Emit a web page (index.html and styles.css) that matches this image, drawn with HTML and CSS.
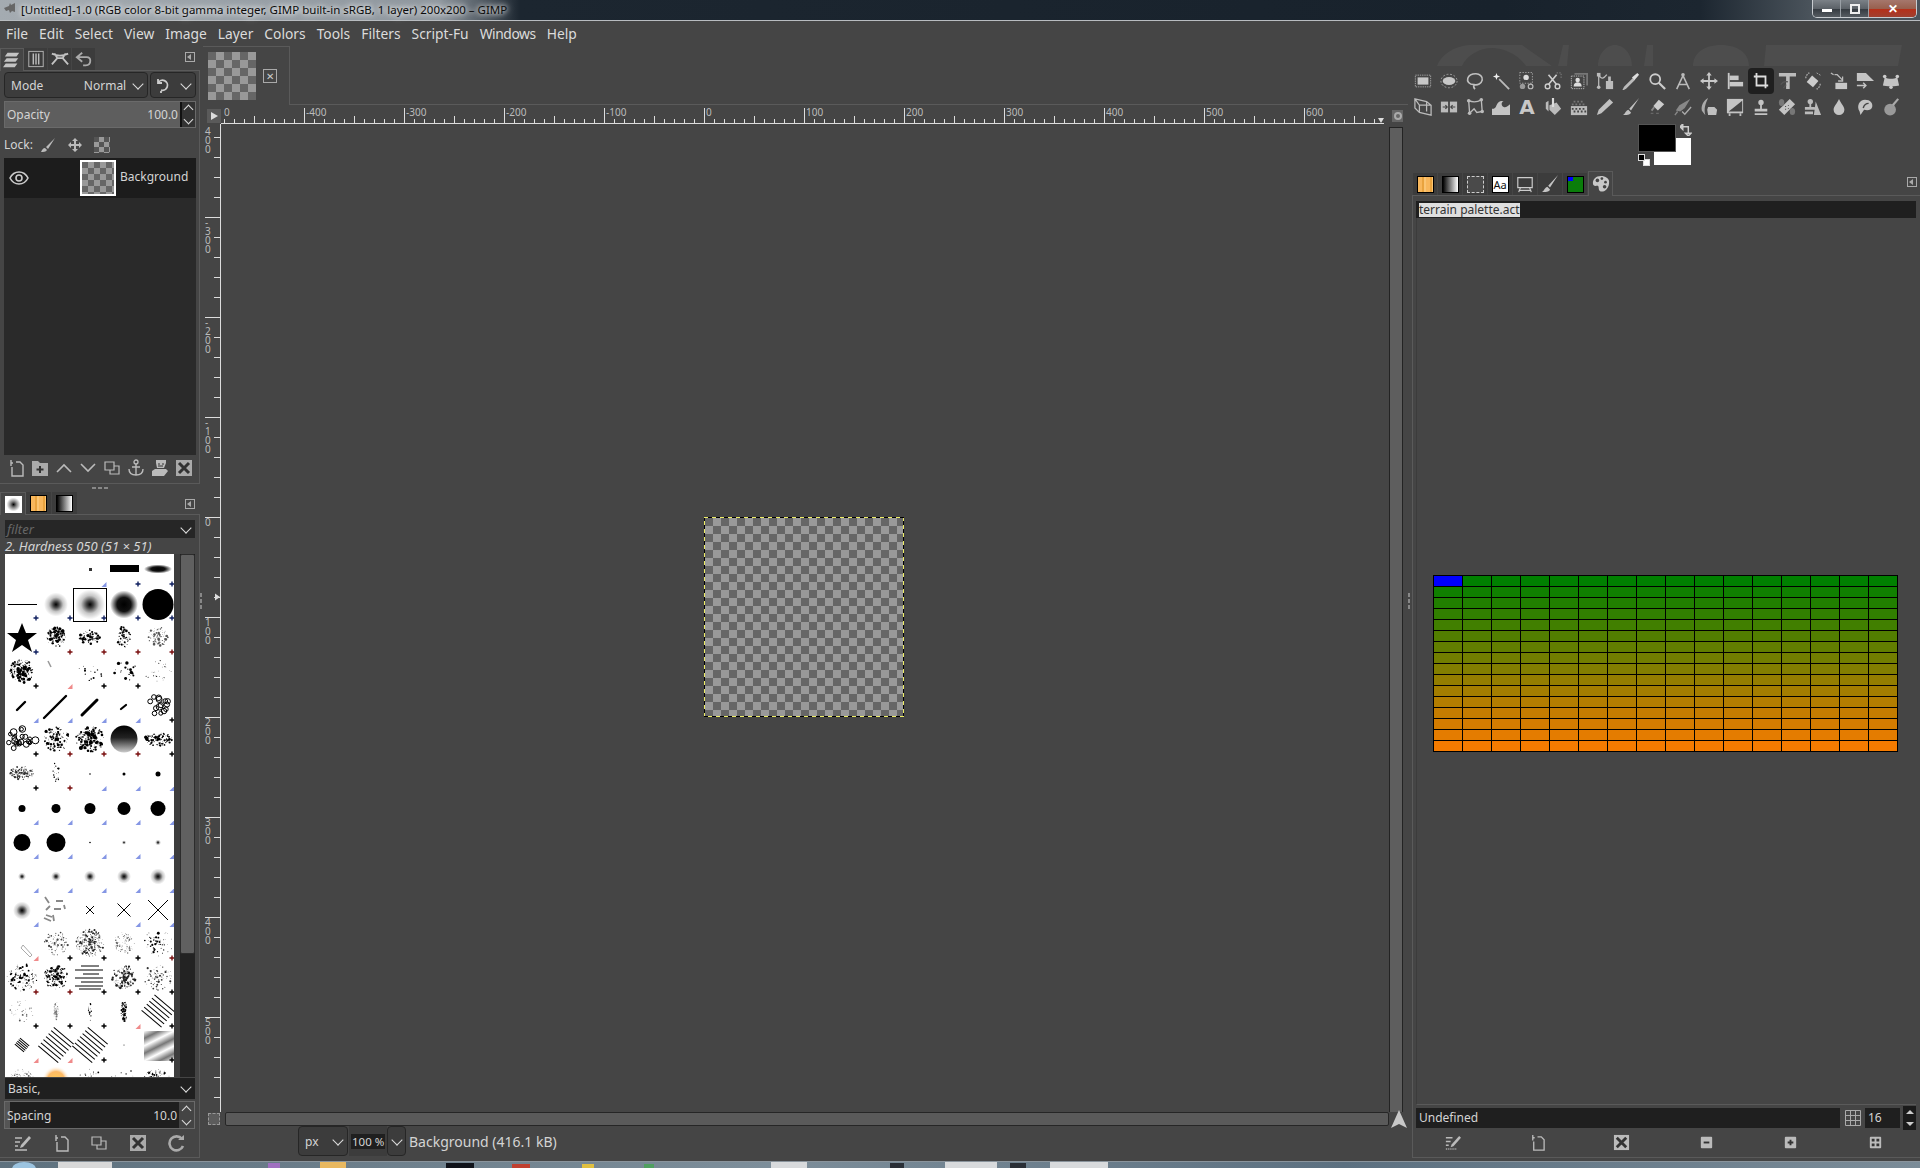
FILE: index.html
```html
<!DOCTYPE html>
<html lang="en">
<head>
  <meta charset="UTF-8" />
  <title>GIMP</title>
  <link rel="stylesheet" href="styles.css">
</head>
<body>
  <div class="titlebar">
    <svg class="app-icon" viewBox="0 0 16 14"><path d="M1 6l5-2 1-3 1 2 4-2v9l-3-1-2 2-1-3-3 1z" fill="#666"/></svg>
    <span class="title">[Untitled]-1.0 (RGB color 8-bit gamma integer, GIMP built-in sRGB, 1 layer) 200x200 – GIMP</span>
    <div class="winbtns">
      <div class="winbtn"><span class="min-glyph"></span></div>
      <div class="winbtn"><span class="max-glyph"></span></div>
      <div class="winbtn close">✕</div>
    </div>
  </div>

  <div class="menubar">
    <span>File</span><span>Edit</span><span>Select</span><span>View</span><span>Image</span><span>Layer</span><span>Colors</span><span>Tools</span><span>Filters</span><span>Script-Fu</span><span class="menu-win">Windows</span><span>Help</span>
  </div>

  <div class="main">
    <!-- left dock -->
    <div class="dock-left">
      <div class="tabs">
        <div class="tab active"><svg viewBox="0 0 20 20"><path d="M5 2h13l-3 4H2zM4 8h13l-3 4H1zM3 14h13l-3 4H0z" fill="#c4c4c4"/></svg></div>
        <div class="tab"><svg viewBox="0 0 20 20"><rect x="2" y="1.5" width="16" height="17" fill="none" stroke="#bbb"/><path d="M7 4v12M10 4v12M13 4v12" stroke="#bbb" stroke-width="1.6"/></svg></div>
        <div class="tab"><svg viewBox="0 0 20 20"><path d="M1 4c6 3 12 3 18 0M1 16l6-7 6 0 6 7M4 4l3 5M16 4l-3 5" fill="none" stroke="#c4c4c4" stroke-width="2"/></svg></div>
        <div class="tab"><svg viewBox="0 0 20 20"><path d="M8 3L2 8l6 5M3 8h10c3 0 4 2 4 4s-1 5-5 5H9" fill="none" stroke="#aaa" stroke-width="2"/></svg></div>
        <span class="collapse"></span>
      </div>
      <div class="panel layers">
        <div class="mode-row">
          <div class="combo mode"><span>Mode</span><span class="mode-val">Normal</span><i class="chev"></i></div>
          <div class="combo mode-small">
            <svg viewBox="0 0 16 16"><path d="M3 6a5 5 0 1 1 3 7M3 2v4h4M6 14v2" fill="none" stroke="#ccc" stroke-width="1.8"/></svg>
            <i class="chev"></i>
          </div>
        </div>
        <div class="slider opacity"><span>Opacity</span><span class="val">100.0</span><div class="spin"><i class="chev up"></i><i class="chev"></i></div></div>
        <div class="lock-row">
          <span>Lock:</span>
          <svg viewBox="0 0 16 16"><path d="M15 1L6 10l2 2zM5 11c-2 0-3 2-4 4 2 0 5 0 6-2z" fill="#bbb"/></svg>
          <svg viewBox="0 0 16 16"><path d="M8 1l3 3H9v3h3V5l3 3-3 3V9H9v3h2l-3 3-3-3h2V9H4v2L1 8l3-3v2h3V4H5z" fill="#bbb"/></svg>
          <div class="lock-check"></div>
        </div>
        <div class="layer-list">
          <div class="layer-row">
            <svg class="eye" viewBox="0 0 20 14"><path d="M1 7c4-8 14-8 18 0-4 8-14 8-18 0z" fill="none" stroke="#ccc" stroke-width="1.6"/><circle cx="10" cy="7" r="3" fill="none" stroke="#ccc" stroke-width="1.6"/></svg>
            <div class="layer-thumb"></div>
            <span class="layer-name">Background</span>
          </div>
        </div>
        <div class="icon-row layer-icons">
          <svg viewBox="0 0 18 18"><path d="M6 4H3.5M4 1v6M9 3h4l3 3v11H5V8" fill="none" stroke="#bbb" stroke-width="1.4"/></svg>
          <svg viewBox="0 0 18 18"><path d="M1 2h6l2 2h8v13H1z" fill="#aaa"/><path d="M9 7v7M5.500 10.500h7" stroke="#333" stroke-width="2"/></svg>
          <svg viewBox="0 0 18 18"><path d="M2 13l7-7 7 7" fill="none" stroke="#bbb" stroke-width="1.600"/></svg>
          <svg viewBox="0 0 18 18"><path d="M2 5l7 7 7-7" fill="none" stroke="#bbb" stroke-width="1.600"/></svg>
          <svg viewBox="0 0 18 18"><path d="M2 3h9v8H2zM7 11v4h9V7h-5" fill="none" stroke="#bbb" stroke-width="1.200"/></svg>
          <svg viewBox="0 0 18 18"><circle cx="9" cy="3" r="2" fill="none" stroke="#bbb" stroke-width="1.300"/><path d="M9 5v11M5 8h8M2 10c0 4 3 6 7 6s7-2 7-6" fill="none" stroke="#bbb" stroke-width="1.400"/></svg>
          <svg viewBox="0 0 18 18"><path d="M5 1h10v3l-2 5H6L5 4zM1 12l3-2h11l2 2-4 5H1z" fill="#bbb"/><path d="M7 5h2M11 5h2M7 7h5" stroke="#333"/></svg>
          <svg viewBox="0 0 18 18"><path d="M1 1h16v16H1z" fill="#aaa"/><path d="M4 4l10 10M14 4L4 14" stroke="#333" stroke-width="3"/></svg>
        </div>
      </div>
      <div class="drag-dots"><i></i><i></i><i></i></div>
      <div class="tabs tabs-brush">
        <div class="tab active"><div class="tab-thumb brush-thumb"></div></div>
        <div class="tab"><div class="tab-thumb pattern-thumb"></div></div>
        <div class="tab"><div class="tab-thumb gradient-thumb"></div></div>
        <span class="collapse"></span>
      </div>
      <div class="panel brushes">
        <div class="combo filter"><em>filter</em><i class="chev"></i></div>
        <div class="brush-name">2. Hardness 050 (51 × 51)</div>
        <div class="brush-view">
          <div class="brush-grid" id="brushGrid"></div>
          <div class="vscroll-dark"><div class="thumb"></div></div>
        </div>
        <div class="combo basic"><span>Basic,</span><i class="chev"></i></div>
        <div class="slider spacing"><span>Spacing</span><span class="val">10.0</span><div class="spin"><i class="chev up"></i><i class="chev"></i></div></div>
        <div class="icon-row brush-icons">
          <svg viewBox="0 0 18 18"><path d="M2 4h7M2 8h5M2 12h3M2 16h12" stroke="#bbb" stroke-width="1.600"/><path d="M16 2L8 11l-1 3 3-1 8-9z" fill="#bbb"/></svg>
          <svg viewBox="0 0 18 18"><path d="M6 4H3.500M4 1v6M9 3h4l3 3v11H5V8" fill="none" stroke="#bbb" stroke-width="1.400"/></svg>
          <svg viewBox="0 0 18 18"><path d="M2 3h9v8H2zM7 11v4h9V7h-5" fill="none" stroke="#bbb" stroke-width="1.200"/></svg>
          <svg viewBox="0 0 18 18"><path d="M1 1h16v16H1z" fill="#aaa"/><path d="M4 4l10 10M14 4L4 14" stroke="#333" stroke-width="3"/></svg>
          <svg viewBox="0 0 18 18"><path d="M15 5a7 7 0 1 0 1 7" fill="none" stroke="#aaa" stroke-width="2.600"/><path d="M11 6h6V1z" fill="#aaa"/></svg>
        </div>
      </div>
    </div>

    <div class="gutter left-gutter"><i></i><i></i><i></i></div>

    <!-- image window -->
    <div class="center">
      <div class="image-tabs">
        <div class="image-tab">
          <div class="tab-check"></div>
          <div class="tab-close">✕</div>
        </div>
      </div>
      <div class="ruler-row">
        <div class="ruler-btn"></div>
        <svg class="hruler" id="hruler" width="1163" height="19"></svg>
        <div class="qmask"><i></i></div>
      </div>
      <div class="canvas-row">
        <div class="vruler" id="vruler"></div>
        <div class="canvas">
          <div class="image-frame"><div class="image"></div></div>
        </div>
        <div class="vscroll"><div class="thumb"></div></div>
      </div>
      <div class="hscroll-row">
        <div class="corner-box"></div>
        <div class="hscroll"></div>
        <svg class="nav-arrow" viewBox="0 0 16 18"><path d="M8 0l8 18-8-4-8 4z" fill="#c8c8c8"/></svg>
      </div>
      <div class="statusbar">
        <div class="combo unit"><span>px</span><i class="chev"></i></div>
        <div class="zoom-val"><span>100 %</span></div>
        <div class="combo zoom-drop"><i class="chev"></i></div>
        <span class="status-text">Background (416.1 kB)</span>
      </div>
    </div>

    <div class="gutter right-gutter"><i></i><i></i><i></i></div>

    <!-- right dock -->
    <div class="dock-right">
      <div class="toolbox">
        <svg class="wilber" viewBox="0 0 508 21"><path d="M25 21C30 8 45 0 60 0h50l30 21h-26C105 8 90 3 80 3 68 3 55 10 50 21zM146 21l5-21h6l-2 21zM186 21c0-12 8-21 17-21s17 9 17 21zM232 21l3-21h6v21zM281 21c0-12 10-21 28-21s28 9 28 21zM352 21l2-21h136l-4 21z" fill="#4d4d4d"/></svg>
        <div class="tool-grid">
          <div class="tool"><svg viewBox="0 0 20 20"><rect x="1.500" y="3.500" width="17" height="13" fill="none" stroke="#aaa" stroke-dasharray="1.500 1"/><rect x="4" y="6" width="12" height="8" fill="#c8c8c8"/></svg></div>
          <div class="tool"><svg viewBox="0 0 20 20"><ellipse cx="10" cy="10" rx="9" ry="7.500" fill="none" stroke="#aaa" stroke-dasharray="2 2"/><ellipse cx="10" cy="10" rx="7" ry="4.500" fill="#c8c8c8"/></svg></div>
          <div class="tool"><svg viewBox="0 0 20 20"><path d="M9 14C3 14 1 10 2 7s5-5 9-5 8 3 7 7-5 6-9 5c-1 2 0 4 1 5" fill="none" stroke="#c0c0c0" stroke-width="1.800"/></svg></div>
          <div class="tool"><svg viewBox="0 0 20 20"><path d="M8 8l11 11" stroke="#bbb" stroke-width="2"/><path d="M5 1l1 3 3 1-3 1-1 3-1-3-3-1 3-1z" fill="#eee"/></svg></div>
          <div class="tool"><svg viewBox="0 0 20 20"><rect x="2" y="0.500" width="14" height="12" fill="none" stroke="#aaa" stroke-dasharray="1.500 1.500"/><circle cx="9" cy="6" r="3" fill="#ddd"/><circle cx="5" cy="16" r="3" fill="#999"/><circle cx="14" cy="16" r="2.600" fill="none" stroke="#bbb" stroke-width="1.300"/></svg></div>
          <div class="tool"><svg viewBox="0 0 20 20"><circle cx="4" cy="16" r="2.600" fill="none" stroke="#ccc" stroke-width="1.600"/><circle cx="15" cy="16" r="2.600" fill="none" stroke="#ccc" stroke-width="1.600"/><path d="M5 14L14 3M14 14L5 3" stroke="#ccc" stroke-width="1.800"/><path d="M14 1h5v6" fill="none" stroke="#888" stroke-dasharray="1.500 1.500"/></svg></div>
          <div class="tool"><svg viewBox="0 0 20 20"><path d="M5 2h14v13" fill="none" stroke="#777" stroke-width="2"/><rect x="1.500" y="4.500" width="14" height="14" fill="none" stroke="#bbb" stroke-dasharray="1.500 1"/><circle cx="8.500" cy="9" r="2.500" fill="#ddd"/><path d="M4 16c0-6 9-6 9 0z" fill="#ddd"/></svg></div>
          <div class="tool"><svg viewBox="0 0 20 20"><path d="M3 18V3c3 6 6 4 9 0" fill="none" stroke="#bbb" stroke-width="1.400"/><rect x="1" y="1" width="4" height="4" fill="#bbb"/><circle cx="3" cy="17" r="2" fill="#bbb"/><rect x="11" y="10" width="8" height="9" fill="#bbb"/><rect x="13.500" y="5" width="3" height="5" fill="#bbb"/></svg></div>
          <div class="tool"><svg viewBox="0 0 20 20"><path d="M13 7L3 17l-1 2 2-1L14 8" fill="none" stroke="#bbb" stroke-width="1.800"/><path d="M11 6l3 3 5-6-2-2z" fill="#ddd"/></svg></div>
          <div class="tool"><svg viewBox="0 0 20 20"><circle cx="8" cy="8" r="5.500" fill="none" stroke="#ccc" stroke-width="2"/><path d="M12 12l7 7" stroke="#ccc" stroke-width="2.400"/></svg></div>
          <div class="tool"><svg viewBox="0 0 20 20"><path d="M10 4L3 19M10 4l7 15M5 14h10" fill="none" stroke="#bbb" stroke-width="1.700"/><circle cx="10" cy="3" r="2" fill="#bbb"/></svg></div>
          <div class="tool"><svg viewBox="0 0 20 20"><path d="M10 0l3 4h-2v5h5V7l4 3-4 3v-2h-5v5h2l-3 4-3-4h2v-5H4v2l-4-3 4-3v2h5V4H7z" fill="#c8c8c8"/></svg></div>
          <div class="tool"><svg viewBox="0 0 20 20"><path d="M3 1v18" stroke="#c8c8c8" stroke-width="2"/><rect x="4" y="4" width="10" height="5" fill="#c8c8c8"/><rect x="4" y="11" width="15" height="5" fill="#c8c8c8"/></svg></div>
          <div class="tool selected"><svg viewBox="0 0 20 20"><path d="M5 1v14h13M2 5h13v13" fill="none" stroke="#ddd" stroke-width="2"/></svg></div>
          <div class="tool"><svg viewBox="0 0 20 20"><path d="M1 1h19v4h-7v14H9V5H1z" fill="#bbb"/><path d="M3 14c2-3 5-4 8-3M6 18l3-4" fill="none" stroke="#555" stroke-width="1.400"/></svg></div>
          <div class="tool"><svg viewBox="0 0 20 20"><path d="M9 4l7 6-6 7-7-6z" fill="#ccc"/><path d="M2 7c0-3 2-5 4-6M18 13c0 3-2 5-4 6" fill="none" stroke="#aaa" stroke-dasharray="2 1" stroke-width="1.400"/><path d="M14 1l5 3" stroke="#aaa" stroke-dasharray="2 1"/></svg></div>
          <div class="tool"><svg viewBox="0 0 20 20"><path d="M1 1l3 2M5 3h3l6 6" fill="none" stroke="#bbb" stroke-width="1.400"/><path d="M14 5v5H9" fill="none" stroke="#bbb" stroke-width="1.400"/><rect x="6" y="12" width="13" height="7" fill="#c8c8c8"/></svg></div>
          <div class="tool"><svg viewBox="0 0 20 20"><path d="M1 1h10l9 9H1z" fill="#c4c4c4"/><path d="M1 15h10M8 12l3 3-3 3" fill="none" stroke="#c4c4c4" stroke-width="1.600"/></svg></div>
          <div class="tool"><svg viewBox="0 0 20 20"><path d="M3 6c4 2 10 2 14 0l2 9c-2 1-16 1-18 0z" fill="#c4c4c4"/><circle cx="3" cy="5" r="2" fill="#ccc"/><circle cx="17" cy="5" r="2" fill="#ccc"/><circle cx="10" cy="17" r="2" fill="#ccc"/></svg></div>

          <div class="tool"><svg viewBox="0 0 20 20"><path d="M1 1l13 3 5 4v11L6 16 1 11zM1 1l5 7v8M6 8h13M14 4v11" fill="none" stroke="#bbb" stroke-width="1.400"/></svg></div>
          <div class="tool"><svg viewBox="0 0 20 20"><rect x="1" y="4" width="8" height="12" fill="#bbb"/><rect x="11" y="4" width="8" height="12" fill="#bbb"/><path d="M3 10h5M6 8l2 2-2 2M17 10h-5M14 8l-2 2 2 2" fill="none" stroke="#444" stroke-width="1.300"/></svg></div>
          <div class="tool"><svg viewBox="0 0 20 20"><path d="M3 3c5 2 9 2 14-1l1 13-6 1-3-4-5 5z" fill="none" stroke="#bbb" stroke-width="1.500"/><g fill="#bbb"><circle cx="3" cy="3" r="2"/><circle cx="17" cy="2" r="2"/><circle cx="18" cy="15" r="2"/><circle cx="4" cy="17" r="2"/></g></svg></div>
          <div class="tool"><svg viewBox="0 0 20 20"><path d="M0 19v-7c3 0 4-1 5-4s5-6 8-4c-3 0-3 5 0 6 2 1 5-1 7-3v12z" fill="#c4c4c4"/></svg></div>
          <div class="tool"><span class="tool-a">A</span></div>
          <div class="tool"><svg viewBox="0 0 20 20"><path d="M2 5l3-2v12l-3-3zM6 8l8-3 5 7-7 7-6-6z" fill="#bbb"/><path d="M10 0v10" stroke="#ddd" stroke-width="2.400"/></svg></div>
          <div class="tool"><svg viewBox="0 0 20 20"><rect x="1" y="9" width="18" height="10" fill="#bbb"/><path d="M2 11h2v2H2zM6 11h2v2H6zM10 11h2v2h-2zM14 11h2v2h-2zM4 14h2v2H4zM8 14h2v2H8zM12 14h2v2h-2zM16 14h2v2h-2z" fill="#444"/><path d="M4 3h2v2H4zM8 3h2v2H8zM12 3h2v2h-2zM2 6h2v2H2zM6 6h2v2H6zM10 6h2v2h-2zM14 6h2v2h-2z" fill="#777"/></svg></div>
          <div class="tool"><svg viewBox="0 0 20 20"><path d="M15 1l4 4L6 17l-5 2 2-6z" fill="#c0c0c0"/></svg></div>
          <div class="tool"><svg viewBox="0 0 20 20"><path d="M19 0L8 12l2 2zM7 13c-3 1-3 4-6 6 4 0 8 0 9-3z" fill="#c0c0c0"/></svg></div>
          <div class="tool"><svg viewBox="0 0 20 20"><path d="M6 9l6-7 6 5-7 7z" fill="#ccc"/><path d="M3 17h3M9 17h3" stroke="#777"/><path d="M4 14l3-4" stroke="#888" stroke-width="2"/></svg></div>
          <div class="tool"><svg viewBox="0 0 20 20"><path d="M18 1L6 8 2 14l5 1 5-4z" fill="#888"/><path d="M9 15l3 3 7-8" fill="none" stroke="#aaa" stroke-width="1.500"/><path d="M1 19l3-4" stroke="#888" stroke-width="1.500"/></svg></div>
          <div class="tool"><svg viewBox="0 0 20 20"><path d="M9 0C4 3 1 8 2 14c1 2 3 4 4 5-1-4-2-9 3-19z" fill="#aaa"/><path d="M9 10h7l3 3-1 6H9l-1-6z" fill="#c0c0c0"/></svg></div>
          <div class="tool"><svg viewBox="0 0 20 20"><path d="M1 1h18v16H1z" fill="#c4c4c4"/><path d="M3 15L18 3v12z" fill="#444"/><path d="M4 17v3M16 17v3" stroke="#bbb" stroke-width="2"/></svg></div>
          <div class="tool"><svg viewBox="0 0 20 20"><circle cx="10" cy="5" r="3" fill="#c4c4c4"/><path d="M9 7h2v5h6v3H3v-3h6zM3 17h14v2H3z" fill="#c4c4c4"/></svg></div>
          <div class="tool"><svg viewBox="0 0 20 20"><path d="M13 1l6 6L7 19l-6-6z" fill="#c4c4c4"/><ellipse cx="4" cy="5" rx="3" ry="4" fill="#777"/><ellipse cx="16" cy="15" rx="3" ry="4" fill="#777"/><path d="M8 9h1v1H8zM11 8h1v1h-1zM8 12h1v1H8zM11 11h1v1h-1z" fill="#333"/></svg></div>
          <div class="tool"><svg viewBox="0 0 20 20"><circle cx="7" cy="4" r="3" fill="#bbb"/><path d="M6 6h2v4h4v3H1v-3h5zM1 15h9v3H1zM13 4l6 15h-8z" fill="#bbb"/></svg></div>
          <div class="tool"><svg viewBox="0 0 20 20"><path d="M10 1c2 5 6 8 6 12a6 6 0 0 1-12 0c0-4 4-7 6-12z" fill="#c4c4c4"/></svg></div>
          <div class="tool"><svg viewBox="0 0 20 20"><path d="M4 15C0 9 4 2 10 2s9 4 8 8-6 4-9 3l-4 6z" fill="#c4c4c4"/><path d="M8 11c1-3 3-5 6-5" stroke="#444" stroke-width="1.600" fill="none"/></svg></div>
          <div class="tool"><svg viewBox="0 0 20 20"><circle cx="9" cy="13" r="6.500" fill="#999"/><path d="M12 8l6-7" stroke="#aaa" stroke-width="2.400"/></svg></div>
        </div>
        <div class="color-area">
          <div class="bg-swatch"></div>
          <div class="fg-swatch"></div>
          <svg class="swap" viewBox="0 0 13 13"><path d="M1 3h8v8M0 3l3-3v6zM9 13l-3-3h6z" fill="none" stroke="#ccc" stroke-width="1.600"/></svg>
          <div class="mini mini-bg"></div>
          <div class="mini mini-fg"></div>
        </div>
      </div>
      <div class="tabs tabs-palette">
        <div class="tab"><div class="tab-thumb pattern-thumb"></div></div>
        <div class="tab"><div class="tab-thumb gradient-thumb"></div></div>
        <div class="tab"><div class="tab-thumb dashed-thumb"></div></div>
        <div class="tab"><div class="tab-thumb font-thumb">Aa</div></div>
        <div class="tab"><svg viewBox="0 0 20 20"><path d="M2 3h16v11H2zM5 14l-2 5M15 14l2 5M3 17h14" fill="none" stroke="#ccc" stroke-width="1.300"/></svg></div>
        <div class="tab"><svg viewBox="0 0 20 20"><path d="M19 0L8 12l2 2zM7 13c-3 1-3 4-6 6 4 0 8 0 9-3z" fill="#c4c4c4"/></svg></div>
        <div class="tab"><div class="tab-thumb green-thumb"></div></div>
        <div class="tab active"><svg viewBox="0 0 20 20"><path d="M10 1C4 1 1 5 1 9s3 3 5 3 1 3 2 5 5 2 8-1 3-6 3-9-4-6-9-6z" fill="#c8c8c8"/><circle cx="6" cy="6" r="2" fill="#444"/><circle cx="11" cy="4" r="1.500" fill="#444"/><circle cx="15" cy="8" r="1.500" fill="#444"/><circle cx="14" cy="13" r="2" fill="#444"/></svg></div>
        <span class="collapse"></span>
      </div>
      <div class="panel palette-panel">
        <div class="palette-name"><span>terrain palette.act</span></div>
        <div class="palette-view">
          <div class="palette-grid" id="paletteGrid"></div>
        </div>
        <div class="palette-footer">
          <div class="palette-entry">Undefined</div>
          <svg class="cols-icon" viewBox="0 0 16 16"><path d="M.5.500h15v15H.500zM5.500.500v15M10.500.500v15M.500 5.500h15M.500 10.500h15" fill="none" stroke="#aaa"/></svg>
          <div class="cols-entry">16</div>
          <div class="cols-spin"><i></i><i></i></div>
        </div>
        <div class="palette-icons">
          <svg viewBox="0 0 18 18"><path d="M2 4h7M2 8h5M2 12h3" stroke="#bbb" stroke-width="1.600"/><path d="M2 16h12" stroke="#bbb" stroke-width="1.600" stroke-dasharray="1 1"/><path d="M16 2L8 11l-1 3 3-1 8-9z" fill="#bbb"/></svg>
          <svg viewBox="0 0 18 18"><path d="M6 4H3.500M4 1v6M9 3h4l3 3v11H5V8" fill="none" stroke="#bbb" stroke-width="1.400"/></svg>
          <svg viewBox="0 0 18 18"><path d="M1 1h16v16H1z" fill="#bbb"/><path d="M4 4l10 10M14 4L4 14" stroke="#333" stroke-width="3"/></svg>
          <svg viewBox="0 0 18 18"><rect x="3" y="3" width="12" height="12" rx="1" fill="#bbb"/><path d="M6 9h6" stroke="#333" stroke-width="2"/></svg>
          <svg viewBox="0 0 18 18"><rect x="3" y="3" width="12" height="12" rx="1" fill="#bbb"/><path d="M6 9h6M9 6v6" stroke="#333" stroke-width="2"/></svg>
          <svg viewBox="0 0 18 18"><rect x="3" y="3" width="12" height="12" rx="1" fill="#bbb"/><path d="M5 5h3v3H5zM10 5h3v3h-3zM5 10h3v3H5zM10 10h3v3h-3z" fill="#333"/></svg>
        </div>
      </div>
    </div>
  </div>

  <div class="taskbar">
    <i class="orb"></i><i class="task-btn"></i>
  </div>

  <script src="script.js"></script>
</body>
</html>
```

FILE: styles.css
```css
* {
  box-sizing: border-box;
}

html, body {
  margin: 0;
  height: 1168px;
  overflow: hidden;
}

body {
  background: #454545;
  color: #d4d4d4;
  font-family: 'Noto Sans', sans-serif;
  font-size: 12px;
  display: flex;
  flex-direction: column;
}

/* window frame */
.titlebar {
  height: 21px;
  flex: none;
  display: flex;
  align-items: flex-start;
  position: relative;
  border-bottom: 1px solid #b8bcc0;
  background: linear-gradient(90deg, #a4abb1 0, #8f979e 440px, #1c2630 520px, #18222c 1500px, #1c2630 1700px, #4a535b 1810px, #4a535b 1920px);
}

.app-icon {
  width: 16px;
  height: 14px;
  margin: 2px 2px 0 3px;
}

.title {
  font-size: 11.500px;
  line-height: 19px;
  color: #0c0c0c;
  text-shadow: 0 0 5px #fff, 0 0 8px #fff;
}

.winbtns {
  position: absolute;
  top: 0;
  right: 3px;
  display: flex;
  height: 18px;
  border: 1px solid #c8ccd0;
  border-top: 0;
  border-radius: 0 0 5px 5px;
  overflow: hidden;
}

.winbtn {
  width: 28px;
  display: flex;
  align-items: center;
  justify-content: center;
  background: linear-gradient(#7b8187, #5c6268 50%, #363c42 55%, #565c62);
  border-right: 1px solid #9aa0a6;
  color: #fff;
}

.winbtn.close {
  width: 47px;
  border: 0;
  font-size: 12px;
  font-weight: bold;
  background: linear-gradient(#a5776c, #98604f 50%, #b5301a 55%, #a04030);
}

.min-glyph {
  width: 10px;
  height: 3px;
  margin-top: 3px;
  background: #fff;
}

.max-glyph {
  width: 10px;
  height: 10px;
  border: 2px solid #eee;
}

.menubar {
  height: 24px;
  flex: none;
  display: flex;
  align-items: center;
  padding-left: 6px;
  gap: 11px;
  font-size: 13.800px;
  color: #dcdcdc;
}

.menu-win {
  letter-spacing: -0.400px;
}

.main {
  flex: 1;
  display: flex;
  min-height: 0;
  padding-bottom: 3px;
}

/* docks */
.dock-left {
  width: 200px;
  flex: none;
  display: flex;
  flex-direction: column;
}

.tabs {
  display: flex;
  align-items: flex-end;
  position: relative;
  height: 25px;
  padding-top: 2px;
  flex: none;
}

.tab {
  width: 24px;
  height: 22px;
  display: flex;
  align-items: center;
  justify-content: center;
  background: #3c3c3c;
  border-right: 1px solid #454545;
}

.tab svg {
  width: 18px;
  height: 18px;
}

.tab.active {
  height: 23px;
  background: #454545;
  border: 1px solid #5a5a5a;
  border-bottom: 0;
  margin-bottom: -1px;
  z-index: 1;
}

.collapse {
  position: absolute;
  right: 5px;
  top: 7px;
  width: 10px;
  height: 10px;
  border: 1px solid #aaa;
}

.collapse::after {
  content: '';
  position: absolute;
  left: 1px;
  top: 1px;
  border: 3px solid transparent;
  border-right: 4px solid #aaa;
  border-left: 0;
}

.panel {
  border: 1px solid #5a5a5a;
  border-left: 0;
  display: flex;
  flex-direction: column;
}

.layers {
  height: 414px;
  flex: none;
  padding: 1px 3px 0 4px;
}

.mode-row {
  display: flex;
  gap: 2px;
  height: 26px;
  flex: none;
}

.combo {
  display: flex;
  align-items: center;
  background: #3c3c3c;
  border: 1px solid #262626;
  border-radius: 4px;
  font-size: 12px;
}

.mode {
  width: 145px;
  padding-left: 6px;
}

.mode-val {
  margin-left: auto;
  margin-right: 4px;
}

.mode-small {
  width: 46px;
  padding-left: 4px;
  justify-content: space-between;
}

.mode-small svg {
  width: 16px;
  height: 16px;
}

.chev {
  width: 8px;
  height: 8px;
  flex: none;
  border: solid #ddd;
  border-width: 0 1.500px 1.500px 0;
  transform: rotate(45deg);
  margin: -3px 5px 0 4px;
}

.chev.up {
  transform: rotate(225deg);
  margin-top: 5px;
}

.slider {
  display: flex;
  align-items: center;
  position: relative;
  border: 1px solid #6a6a6a;
  font-size: 12px;
  padding-left: 2px;
  flex: none;
}

.slider .val {
  margin-left: auto;
  margin-right: 2px;
}

.spin {
  width: 15px;
  height: 100%;
  display: flex;
  flex-direction: column;
  align-items: center;
  justify-content: space-around;
  background: #333;
}

.spin .chev {
  width: 7px;
  height: 7px;
  margin: 0;
}

.spin .chev.up {
  margin-top: 3px;
}

.spin .chev:last-child {
  margin-bottom: 3px;
}

.opacity {
  height: 27px;
  margin-top: 3px;
  background: #5e5e5e;
}

.opacity .spin {
  border-left: 2px solid #111;
}

.lock-row {
  height: 27px;
  display: flex;
  align-items: center;
  flex: none;
  margin-top: 3px;
  font-size: 12px;
}

.lock-row svg {
  width: 16px;
  height: 16px;
  margin-left: 9px;
}

.lock-row svg:first-of-type {
  margin-left: 7px;
}

.lock-row svg:nth-of-type(2) {
  margin-left: 11px;
}

.lock-check {
  width: 16px;
  height: 16px;
  margin-left: 11px;
  background: conic-gradient(#999 25%, #555 0 50%, #999 0 75%, #555 0) 0 0 / 10px 10px;
}

.layer-list {
  height: 297px;
  flex: none;
  background: #2a2a2a;
}

.layer-row {
  height: 40px;
  display: flex;
  align-items: center;
  background: #1c1c1c;
  font-size: 12px;
}

.layer-name {
  margin-bottom: 3px;
}

.eye {
  width: 20px;
  height: 14px;
  margin-left: 5px;
}

.layer-thumb {
  width: 36px;
  height: 36px;
  margin: 0 4px 0 51px;
  border: 2px solid #fff;
  background: conic-gradient(#999 25%, #666 0 50%, #999 0 75%, #666 0) 0 0 / 12px 12px;
}

.icon-row {
  display: flex;
  align-items: center;
  flex: 1;
}

.layer-icons {
  padding: 0 0 2px 3px;
  gap: 6px;
}

.layer-icons svg {
  width: 18px;
  height: 18px;
}

.drag-dots {
  height: 8px;
  flex: none;
  display: flex;
  align-items: center;
  justify-content: center;
  gap: 2px;
}

.drag-dots i {
  width: 4px;
  height: 2px;
  background: #888;
}

.tabs-brush {
  height: 22px;
  padding: 0;
}

.tabs-brush .tab {
  width: 26px;
}

.tab-thumb {
  width: 17px;
  height: 17px;
  border: 1px solid #000;
}

.brush-thumb {
  background: radial-gradient(circle, #000 0, #777 25%, #fff 65%);
  border-color: #fff;
}

.pattern-thumb {
  background: repeating-linear-gradient(90deg, #f8b75c 0 4px, #e9a33e 4px 6px, #fbc573 6px 8px);
}

.gradient-thumb {
  background: linear-gradient(90deg, #000, #fff);
}

.dashed-thumb {
  border: 1px dashed #ccc;
  background: #4a4a4a;
}

.font-thumb {
  background: #fff;
  color: #111;
  font-size: 11px;
  line-height: 15px;
  text-align: center;
}

.green-thumb {
  background: linear-gradient(#00f, #00f) 0 0 / 5px 4px no-repeat, #0a7d0a;
}

.brushes {
  flex: 1;
  min-height: 0;
  padding: 5px 4px 0 5px;
}

.filter {
  height: 18px;
  flex: none;
  border: 0;
  border-radius: 0;
  background: #262626;
  padding-left: 2px;
  justify-content: space-between;
  font-size: 13px;
}

.filter em {
  color: #666;
}

.brush-name {
  height: 16px;
  line-height: 16px;
  font-size: 13px;
  font-style: italic;
  flex: none;
  white-space: nowrap;
}

.brush-view {
  height: 523px;
  flex: none;
  display: flex;
  background: #3d3d3d;
  overflow: hidden;
}

.brush-grid {
  width: 170px;
  height: 523px;
  overflow: hidden;
  background: #fff;
}

.brush-grid svg {
  display: block;
}

.vscroll-dark {
  width: 15px;
  margin-left: 6px;
  background: #232323;
}

.vscroll-dark .thumb {
  height: 400px;
  background: #606060;
  border: 1px solid #2c2c2c;
  border-radius: 2px;
}

.basic {
  height: 21px;
  flex: none;
  margin-top: 1px;
  border: 0;
  border-radius: 0;
  background: #1f1f1f;
  padding-left: 3px;
  justify-content: space-between;
}

.spacing {
  height: 28px;
  margin: 2px 0 0 -1px;
  background: linear-gradient(90deg, #555 5px, #1f1f1f 5px);
}

.spacing .spin {
  background: #444;
}

.brush-icons {
  justify-content: space-between;
  padding: 0 10px 0 8px;
}

.brush-icons svg {
  width: 18px;
  height: 18px;
}

.gutter {
  flex: none;
  position: relative;
}

.left-gutter {
  width: 3px;
}

.right-gutter {
  width: 4px;
}

.gutter i {
  display: block;
  position: absolute;
  left: 0;
  width: 2px;
  height: 4px;
  background: #888;
}

.gutter i:nth-child(1) { top: 548px; }
.gutter i:nth-child(2) { top: 554px; }
.gutter i:nth-child(3) { top: 560px; }

/* image window */
.center {
  width: 1205px;
  flex: none;
  display: flex;
  flex-direction: column;
}

.image-tabs {
  height: 60px;
  flex: none;
  display: flex;
  align-items: flex-end;
  border-bottom: 1px solid #5a5a5a;
  padding-top: 2px;
}

.image-tab {
  width: 87px;
  height: 59px;
  display: flex;
  align-items: center;
  border: 1px solid #5a5a5a;
  border-bottom: 0;
  border-left: 0;
  margin-bottom: -1px;
  background: #454545;
  padding-left: 5px;
}

.tab-check {
  width: 48px;
  height: 48px;
  background: conic-gradient(#999 25%, #666 0 50%, #999 0 75%, #666 0) 0 0 / 16px 16px;
}

.tab-close {
  width: 14px;
  height: 14px;
  margin-left: 7px;
  border: 1px solid #aaa;
  font-size: 10px;
  line-height: 12px;
  text-align: center;
  color: #ccc;
}

.ruler-row {
  height: 19px;
  flex: none;
  display: flex;
  align-items: flex-end;
  padding-left: 4px;
}

.ruler-btn {
  width: 14px;
  height: 14px;
  margin-bottom: 1px;
  background: #5a5a5a;
  position: relative;
}

.ruler-btn::after {
  content: '';
  position: absolute;
  left: 4px;
  top: 3px;
  border: 4px solid transparent;
  border-left: 7px solid #ddd;
  border-right: 0;
}

.hruler {
  flex: none;
  display: block;
}

.qmask {
  width: 11px;
  height: 12px;
  margin: 0 0 2px 8px;
  background: #666;
  display: flex;
  align-items: center;
  justify-content: center;
}

.qmask i {
  width: 8px;
  height: 8px;
  border: 2px solid #aaa;
  border-radius: 50%;
}

.canvas-row {
  height: 988px;
  flex: none;
  display: flex;
}

.vruler {
  width: 18px;
  flex: none;
  position: relative;
  overflow: hidden;
}

.vruler svg {
  display: block;
}

/* one label, its digits wrap to one per line */
.vlabel {
  position: absolute;
  left: 2px;
  width: 7px;
  font-size: 10px;
  line-height: 9px;
  word-break: break-all;
  color: #bbb;
}

.canvas {
  width: 1166px;
  flex: none;
  display: flex;
  align-items: center;
  justify-content: center;
  padding-bottom: 2px;
}

.image-frame {
  width: 200px;
  height: 200px;
  padding: 1px;
  background:
    repeating-linear-gradient(90deg, #eeee66 0 4px, #000 4px 8px) top / 100% 1px no-repeat,
    repeating-linear-gradient(90deg, #000 0 4px, #eeee66 4px 8px) bottom / 100% 1px no-repeat,
    repeating-linear-gradient(0deg, #eeee66 0 4px, #000 4px 8px) left / 1px 100% no-repeat,
    repeating-linear-gradient(0deg, #000 0 4px, #eeee66 4px 8px) right / 1px 100% no-repeat;
}

.image {
  width: 100%;
  height: 100%;
  background: conic-gradient(#999 25%, #666 0 50%, #999 0 75%, #666 0) 0 0 / 16px 16px;
}

.vscroll {
  width: 21px;
  padding: 3px 5px 0 2px;
}

.vscroll .thumb {
  height: 100%;
  background: #5e5e5e;
  border: 1px solid #232323;
  border-bottom: 0;
}

.hscroll-row {
  height: 14px;
  flex: none;
  display: flex;
  align-items: center;
  padding-left: 5px;
}

.corner-box {
  width: 12px;
  height: 12px;
  border: 1px dashed #999;
  background: #5c5c5c;
}

.hscroll {
  width: 1164px;
  height: 14px;
  margin-left: 5px;
  background: #5a5a5a;
  border: 1px solid #262626;
  border-radius: 2px;
}

.nav-arrow {
  width: 16px;
  height: 18px;
  margin-left: 2px;
  flex: none;
}

.statusbar {
  flex: 1;
  display: flex;
  align-items: flex-start;
  padding-left: 95px;
}

.unit {
  width: 50px;
  height: 30px;
  padding-left: 6px;
  justify-content: space-between;
  font-size: 12px;
}

.zoom-val {
  width: 38px;
  height: 30px;
  margin-left: 1px;
  display: flex;
  align-items: center;
  background: #3c3c3c;
  font-size: 11.500px;
}

.zoom-val span {
  background: #1f1f1f;
  padding: 0 1px;
  margin-left: 2px;
}

.zoom-drop {
  width: 19px;
  height: 30px;
  justify-content: center;
}

.zoom-drop .chev {
  margin: -3px 0 0;
}

.status-text {
  margin: 7px 0 0 3px;
  font-size: 14px;
  line-height: 18px;
}

/* right dock */
.dock-right {
  flex: 1;
  display: flex;
  flex-direction: column;
}

.toolbox {
  height: 125px;
  flex: none;
  position: relative;
}

.wilber {
  position: absolute;
  left: 0;
  top: 0;
  width: 508px;
  height: 21px;
}

.tool-grid {
  position: absolute;
  left: -2px;
  top: 23px;
  display: grid;
  grid-template-columns: repeat(19, 26px);
  grid-auto-rows: 26px;
}

.tool {
  display: flex;
  align-items: center;
  justify-content: center;
}

.tool svg {
  width: 18px;
  height: 18px;
}

.tool.selected {
  background: #1f1f1f;
  border-radius: 4px;
}

.tool-a {
  color: #c8c8c8;
  font-family: 'DejaVu Sans', sans-serif;
  font-size: 20px;
  font-weight: bold;
  line-height: 1;
}

.color-area {
  position: absolute;
  left: 226px;
  top: 79px;
  width: 54px;
  height: 43px;
}

.fg-swatch {
  position: absolute;
  left: 0;
  top: 0;
  width: 38px;
  height: 28px;
  background: #000;
  border: 1px solid #555;
}

.bg-swatch {
  position: absolute;
  left: 16px;
  top: 14px;
  width: 37px;
  height: 27px;
  background: #fff;
}

.swap {
  position: absolute;
  left: 42px;
  top: 0;
  width: 12px;
  height: 12px;
}

.mini {
  position: absolute;
  width: 7px;
  height: 7px;
  border: 1px solid #ddd;
}

.mini-bg {
  left: 5px;
  top: 35px;
  background: #fff;
}

.mini-fg {
  left: 0;
  top: 30px;
  background: #000;
}

.tabs-palette {
  height: 25px;
  padding: 0 0 0 1px;
}

.tabs-palette .tab {
  width: 25px;
}

.tabs-palette .tab.active {
  width: 25px;
  height: 25px;
}

.palette-panel {
  flex: 1;
  min-height: 0;
  border: 1px solid #5a5a5a;
  padding: 5px 5px 0 3px;
}

.palette-name {
  height: 17px;
  flex: none;
  background: #1f1f1f;
  padding-left: 3px;
  font-size: 12px;
  line-height: 14px;
  display: flex;
  align-items: center;
}

.palette-name span {
  background: #dfdfdf;
  color: #333;
}

.palette-view {
  height: 887px;
  flex: none;
  border-bottom: 1px solid #5a5a5a;
  border-left: 1px solid #3c3c3c;
  padding: 357px 0 0 16px;
}

.palette-grid {
  display: grid;
  grid-template-columns: repeat(16, 29px);
  grid-auto-rows: 11px;
  width: 465px;
  border: solid #000;
  border-width: 1px 0 0 1px;
}

.palette-grid div {
  border: solid #000;
  border-width: 0 1px 1px 0;
}

.palette-footer {
  height: 21px;
  flex: none;
  display: flex;
  align-items: center;
  margin-top: 2px;
}

.palette-entry {
  width: 424px;
  height: 20px;
  flex: none;
  background: #1f1f1f;
  padding-left: 3px;
  font-size: 12px;
  line-height: 20px;
}

.cols-icon {
  width: 16px;
  height: 16px;
  flex: none;
  margin: 0 4px 0 5px;
}

.cols-entry {
  width: 35px;
  height: 20px;
  flex: none;
  background: #1f1f1f;
  padding-left: 3px;
  font-size: 12px;
  line-height: 20px;
}

.cols-spin {
  width: 13px;
  height: 24px;
  flex: none;
  margin-left: 3px;
  background: #1a1a1a;
  display: flex;
  flex-direction: column;
  align-items: center;
  justify-content: space-around;
}

.cols-spin i {
  width: 0;
  height: 0;
  border: 4px solid transparent;
  border-bottom: 4px solid #ccc;
  border-top: 0;
}

.cols-spin i:last-child {
  border-top: 4px solid #ccc;
  border-bottom: 0;
}

.palette-icons {
  flex: 1;
  display: flex;
  align-items: center;
  justify-content: space-between;
  padding: 0 32px 0 28px;
}

.palette-icons svg {
  width: 17px;
  height: 17px;
}

.taskbar {
  height: 7px;
  flex: none;
  display: flex;
  border-top: 1px solid #8a949c;
  background:
    linear-gradient(#a070c0, #a070c0) 268px 1px / 12px 6px no-repeat,
    linear-gradient(#e8b860, #e8b860) 320px 0 / 26px 6px no-repeat,
    linear-gradient(#10131a, #10131a) 446px 1px / 28px 6px no-repeat,
    linear-gradient(#c04030, #c04030) 512px 2px / 18px 5px no-repeat,
    linear-gradient(#e0c040, #e0c040) 582px 2px / 12px 5px no-repeat,
    linear-gradient(#50a060, #50a060) 644px 2px / 10px 5px no-repeat,
    linear-gradient(#d8dadc, #d8dadc) 771px 0 / 36px 6px no-repeat,
    linear-gradient(#2a2f36, #2a2f36) 890px 1px / 14px 6px no-repeat,
    linear-gradient(#d8dadc, #d8dadc) 945px 0 / 52px 6px no-repeat,
    linear-gradient(#2a2f36, #2a2f36) 1010px 1px / 16px 6px no-repeat,
    linear-gradient(#d8dadc, #d8dadc) 1050px 0 / 58px 6px no-repeat,
    linear-gradient(90deg, #5e717e, #7d8e9a 40%, #5c7080 70%, #7b8c98);
}

.orb {
  width: 24px;
  height: 14px;
  margin-left: 12px;
  border-radius: 50%;
  background: #9cc4e0;
}

.task-btn {
  width: 54px;
  margin-left: 22px;
  background: #d8d8d8;
}
```

FILE: script.js
```javascript
// rulers: image origin sits at x=704, y=517
const ORIGIN_X = 704 - 221;
const ORIGIN_Y = 517 - 124;

function drawRulers() {
  let h = '<path d="M0 18.5H1163" stroke="#ddd"/>';
  for (let x = ORIGIN_X % 10; x < 1163; x += 10) {
    const u = x - ORIGIN_X;
    const len = u % 100 === 0 ? 15 : u % 50 === 0 ? 7 : 4;
    h += `<path d="M${x + 0.5} 18V${18 - len}" stroke="#ddd"/>`;
    if (u % 100 === 0 && u >= -400) {
      h += `<text x="${x + 2}" y="11" fill="#bbb" font-size="10">${u}</text>`;
    }
  }
  h += '<text x="3" y="11" fill="#bbb" font-size="10">0</text>';
  h += '<path d="M1160 18l3-5h-6z" fill="#ddd"/>';
  document.getElementById('hruler').innerHTML = h;

  let ticks = '<path d="M17.5 0V988" stroke="#ddd"/>';
  let labels = '';
  for (let y = ORIGIN_Y % 100 - 100; y < 988; y += 20) {
    const u = y - ORIGIN_Y;
    const len = u % 100 === 0 ? 15 : 6;
    if (y >= 0) ticks += `<path d="M17 ${y + 0.5}H${17 - len}" stroke="#ddd"/>`;
    if (u % 100 === 0) {
      // the topmost label has its minus scrolled out of the ruler
      const text = y < 0 ? String(-u) : String(u);
      const top = y < 0 ? y + 10 : y + 1;
      labels += `<span class="vlabel" style="top:${top}px">${text}</span>`;
    }
  }
  ticks += '<path d="M17 473l-5-3.500v7z" fill="#ddd"/>';
  document.getElementById('vruler').innerHTML =
    `<svg width="18" height="988">${ticks}</svg>${labels}`;
}

function drawPalette() {
  let html = '';
  for (let r = 0; r < 16; r++) {
    const red = Math.round(r * 16.3);
    for (let c = 0; c < 16; c++) {
      const col = r === 0 && c === 0 ? '#0000ff' : `rgb(${red},${128 - Math.round(r * 0.3)},0)`;
      html += `<div style="background:${col}"></div>`;
    }
  }
  document.getElementById('paletteGrid').innerHTML = html;
}

// small seeded generator so the brush noise stays the same every load
let seed = 7;
function rnd() {
  seed = (seed * 16807) % 2147483647;
  return seed / 2147483647;
}

function dot(x, y, r, fill) {
  return `<circle cx="${x.toFixed(1)}" cy="${y.toFixed(1)}" r="${r.toFixed(2)}" fill="${fill || '#000'}"/>`;
}

function splat(rx, ry, n, maxr, fill) {
  let s = '';
  const count = Math.ceil(n * 0.55);
  for (let i = 0; i < count; i++) {
    const a = rnd() * Math.PI * 2;
    const d = Math.pow(rnd(), 0.7);
    s += dot(17 + Math.cos(a) * d * rx, 15 + Math.sin(a) * d * ry, 0.25 + rnd() * rnd() * maxr, fill);
  }
  return s;
}

function disc(r) { return dot(17, 16.5, r); }
function soft(r, g) { return `<circle cx="17" cy="16.500" r="${r}" fill="url(#${g || 'sf'})"/>`; }
function diag(x1, y1, x2, y2, w) {
  return `<path d="M${x1} ${y1}L${x2} ${y2}" stroke="#000" stroke-width="${w}" stroke-linecap="round"/>`;
}
function hatch(cx, cy, w, n, gap) {
  let s = `<g transform="translate(${cx} ${cy}) rotate(40)" stroke="#000">`;
  for (let i = 0; i < n; i++) {
    const y = (i - (n - 1) / 2) * gap;
    s += `<path d="M${-w} ${y}H${w}"/>`;
  }
  return s + '</g>';
}
function cross(r) {
  return `<path d="M${17 - r} ${16 - r}L${17 + r} ${16 + r}M${17 + r} ${16 - r}L${17 - r} ${16 + r}" stroke="#000" fill="none"/>`;
}
function cracks(rx, ry, n) {
  let s = '';
  for (let i = 0; i < n; i++) {
    const a = rnd() * 6.28;
    const d = Math.sqrt(rnd());
    s += `<circle cx="${(17 + Math.cos(a) * d * rx).toFixed(1)}" cy="${(15 + Math.sin(a) * d * ry).toFixed(1)}" r="${(1.5 + rnd() * 2).toFixed(1)}" fill="none" stroke="#000"/>`;
  }
  return s;
}

// each cell: [drawing, mark]; n plus navy, k plus black, r plus red, b triangle blue, p triangle red
const BRUSHES = [
  [['', ''], ['', ''], ['<rect x="16" y="14" width="3" height="3" fill="#333"/>', 'b'],
   ['<rect x="3" y="11" width="29" height="7" fill="#000"/>', 'n'], ['<ellipse cx="17" cy="15" rx="14" ry="4.500" fill="url(#sf2)"/>', 'n']],
  [['<path d="M3 16.500H32" stroke="#000"/>', 'n'], [soft(12), 'n'], [soft(15), 'n'], [soft(14, 'sf2'), 'n'], [disc(15.500), 'n']],
  [['<path d="M17 1l4 10h11l-9 7 4 12-10-7-10 7 4-12-9-7h11z" fill="#000"/>', 'n'],
   [splat(10, 10, 260, 1.500), 'r'], [splat(11, 7, 130, 1.500), 'r'], [splat(7, 11, 110, 1.200), 'r'], [splat(10, 10, 160, 1.200, '#555'), 'r']],
  [[splat(12, 12, 340, 1.500), 'k'], ['<path d="M9 5l3 6" stroke="#999" stroke-width="1.500"/>', 'p'], [splat(13, 11, 24, 1.800), 'k'], [splat(13, 11, 40, 2.500), 'k'], [splat(14, 11, 46, 0.500), '']],
  [[diag(12, 20, 20, 12, 2.400), 'b'], [diag(5, 28, 27, 6, 2.400), 'b'], [diag(9, 25, 24, 10, 3), 'b'], [diag(14, 19, 19, 15, 2.200), 'b'], [cracks(12, 12, 14), 'k']],
  [[cracks(14, 13, 22), 'k'], [splat(13, 12, 260, 1.500), 'r'], [splat(14, 13, 300, 2), 'r'],
   ['<circle cx="17" cy="15" r="13.500" fill="url(#sph)"/>', 'r'], [splat(14, 7, 220, 1.500), 'k']],
  [[splat(12, 7, 260, 1, '#333'), 'k'], [splat(3, 13, 30, 1.200), 'r'], [dot(17, 16, 0.8), 'b'], [dot(17, 16, 1.500), 'b'], [dot(17, 16, 2.500), 'b']],
  [[disc(3.500), 'b'], [disc(4.500), 'b'], [disc(5.500), 'b'], [disc(6.500), 'b'], [disc(7.500), 'b']],
  [[disc(8.500), 'b'], [disc(9.500), 'b'], [dot(17, 16.500, 0.800), 'b'], [soft(2.200), 'b'], [soft(3), 'b']],
  [[soft(4), 'b'], [soft(5), 'b'], [soft(6), 'b'], [soft(7), 'b'], [soft(8), 'b']],
  [[soft(9), 'b'],
   ['<g stroke="#888" stroke-width="1.800"><path d="M6 3l4 6M17 7h7M25 11l1 4M11 12l-4 4M15 15h7M5 24l7 3M14 21l1 6M7 21l6 2"/></g>', ''],
   [cross(4), ''], [cross(6.500), 'b'], [cross(10), 'b']],
  [['<path d="M20 17l9 10-2 2-9-9z" fill="none" stroke="#aaa" transform="translate(-2 0)"/>', 'p'], [splat(12, 12, 140, 1.200, '#444'), 'k'], [splat(14, 14, 480, 1, '#222'), 'k'], [splat(11, 11, 120, 1, '#666'), 'k'], [splat(15, 13, 100, 1.400), 'r']],
  [[splat(15, 14, 220, 1.200), 'r'], [splat(12, 12, 320, 1.200), 'r'],
   ['<path d="M8 4h18M2 8h28M10 12h16M2 16h28M8 20h22M2 24h28M6 27h22" stroke="#000"/>', 'k'],
   [splat(12, 12, 300, 1.400, '#222'), 'k'], [splat(14, 13, 150, 1, '#333'), 'k']],
  [[splat(12, 12, 60, 0.800, '#555'), 'k'], [splat(2.500, 9, 90, 0.800, '#777'), 'k'], [splat(1.500, 10, 26, 1.200), 'k'], [splat(3, 11, 160, 1), 'p'], [hatch(17, 15, 13, 6, 4), 'k']],
  [[hatch(17, 15, 6, 5, 2), 'p'], [hatch(17, 15, 13, 7, 4), 'p'], [hatch(17, 15, 13, 7, 4), 'k'], [dot(17, 15, 0.500), ''], ['<rect x="3" y="1" width="30" height="30" fill="url(#stripes)"/>', 'k']],
  [[splat(12, 10, 120, 0.800, '#555'), ''], ['<circle cx="17" cy="16" r="14" fill="url(#sun)"/>', ''], [splat(13, 10, 40, 1), ''], [splat(13, 10, 40, 1), ''], [splat(14, 10, 160, 1), '']]
];

function mark(m) {
  const plus = { n: '#102060', k: '#000', r: '#7a1010' }[m];
  if (plus) return `<path d="M31 27.500v5M28.500 30h5" stroke="${plus}" stroke-width="1.400"/>`;
  const tri = { b: '#8496e4', p: '#ef8a8a' }[m];
  if (tri) return `<path d="M33.500 28v5h-5z" fill="${tri}"/>`;
  return '';
}

function drawBrushes() {
  let s = `<svg width="170" height="544" viewBox="0 0 170 544"><defs>
    <radialGradient id="sf"><stop offset="0" stop-color="#000"/><stop offset=".25" stop-color="#000" stop-opacity=".72"/><stop offset=".6" stop-color="#000" stop-opacity=".22"/><stop offset="1" stop-color="#000" stop-opacity="0"/></radialGradient>
    <radialGradient id="sf2"><stop offset="0" stop-color="#000"/><stop offset=".5" stop-color="#111"/><stop offset="1" stop-color="#000" stop-opacity="0"/></radialGradient>
    <linearGradient id="sph" x1="0" y1="0" x2="0" y2="1"><stop offset="0" stop-color="#000"/><stop offset=".45" stop-color="#222"/><stop offset="1" stop-color="#ccc"/></linearGradient>
    <radialGradient id="sun"><stop offset="0" stop-color="#ffcc55"/><stop offset=".6" stop-color="#ffbb66"/><stop offset="1" stop-color="#fff" stop-opacity="0"/></radialGradient>
    <linearGradient id="stripes" x1="0" y1="0" x2=".5" y2="1" spreadMethod="repeat" gradientTransform="scale(.4)"><stop offset="0" stop-color="#fff"/><stop offset=".5" stop-color="#777"/><stop offset="1" stop-color="#fff"/></linearGradient>
  </defs>`;
  BRUSHES.forEach((row, r) => {
    row.forEach((b, c) => {
      s += `<g transform="translate(${c * 34} ${r * 34})">${b[0]}${mark(b[1])}</g>`;
    });
  });
  s += '<rect x="68.500" y="34.500" width="33" height="33" fill="none" stroke="#000"/></svg>';
  document.getElementById('brushGrid').innerHTML = s;
}

drawRulers();
drawPalette();
drawBrushes();
```
